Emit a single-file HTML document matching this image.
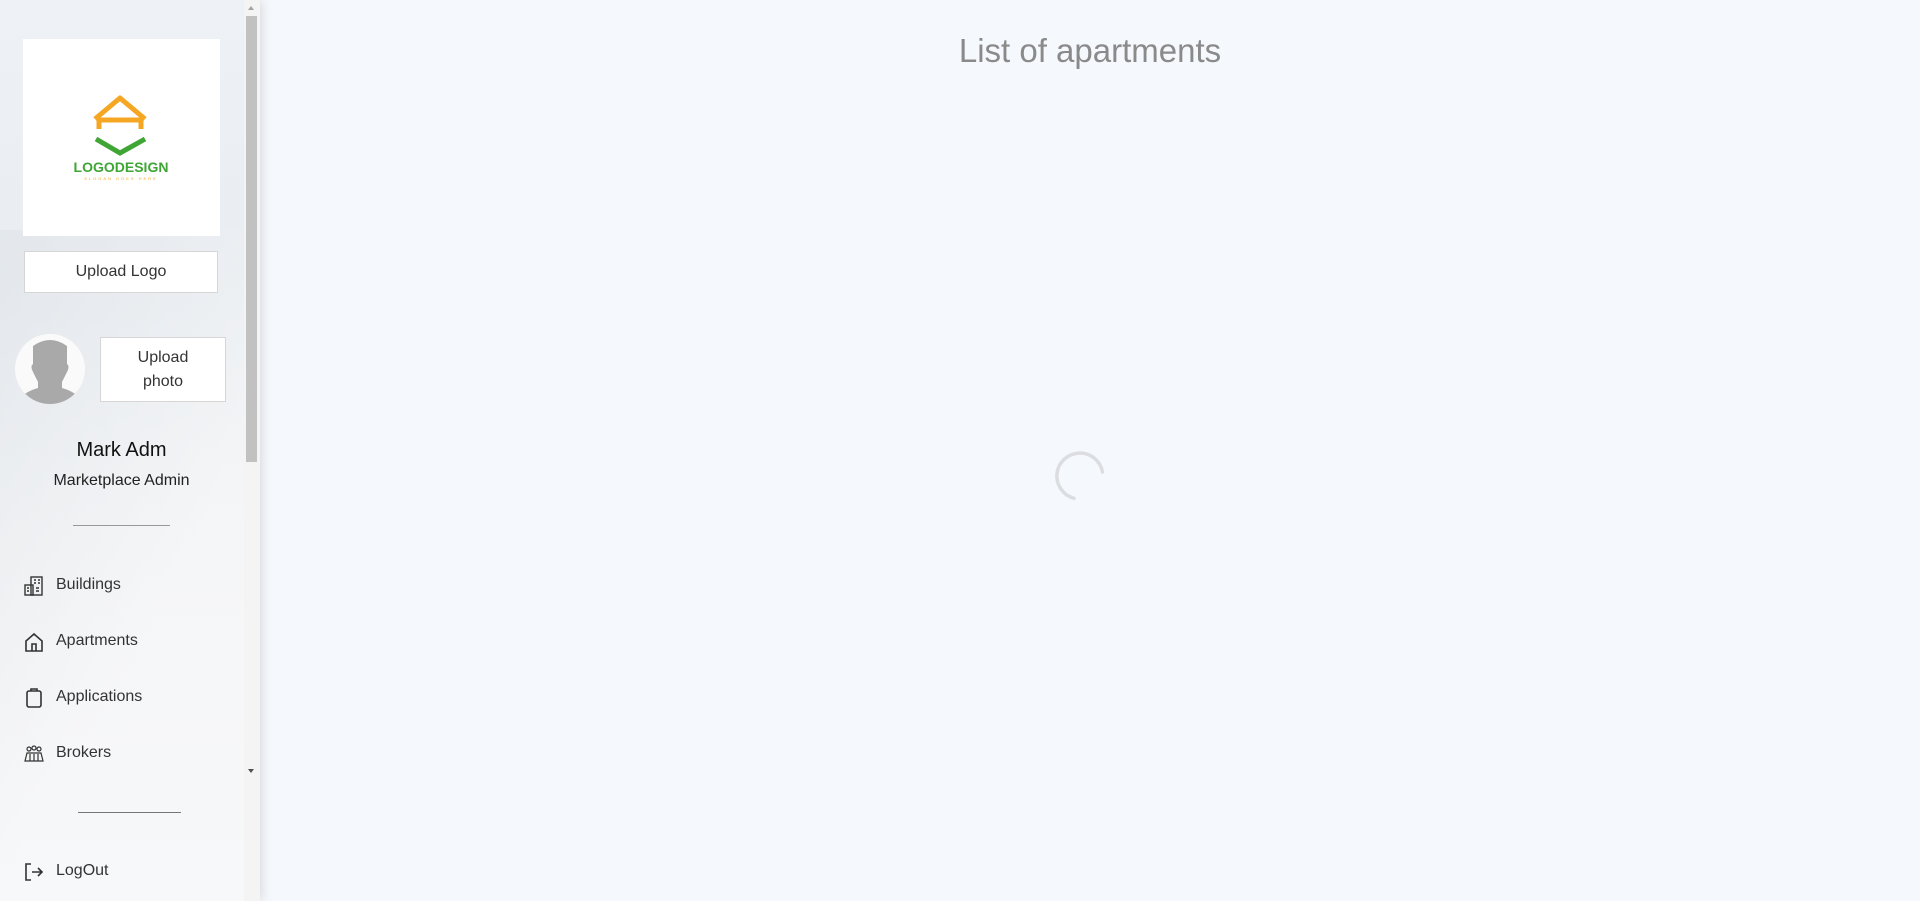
<!DOCTYPE html>
<html><head><meta charset="utf-8"><style>
*{margin:0;padding:0;box-sizing:border-box}
body{width:1920px;height:901px;background:#f5f8fc;font-family:"Liberation Sans",sans-serif;position:relative;overflow:hidden}
.side{position:absolute;left:0;top:0;width:260px;height:901px;background:linear-gradient(180deg,#eef2f6 0%,#e9edf1 30%,#f1f2f4 60%,#f4f5f6 100%);box-shadow:2px 0 10px rgba(0,0,0,.12)}
.a{position:absolute}
.btn{position:absolute;background:#fff;border:1px solid #d6d6d6;color:#333;font-size:16px;text-align:center}
.menu{position:absolute;left:56px;font-size:16px;color:#333}
.ic{position:absolute;left:24px}
</style></head><body>
<div class="side">
  <div class="a" style="left:0;top:230px;width:244px;height:671px;background:linear-gradient(120deg,rgba(220,225,230,.5),rgba(255,255,255,.3) 60%)"></div>
  <div class="a" style="left:23px;top:39px;width:197px;height:197px;background:#fff"></div>
  <svg class="a" style="left:23px;top:39px" width="197" height="197">
    <path d="M72 80 L97 59 L122 80 M76 79 L76 90 M118 79 L118 90 M74 81 L120 81" stroke="#f5a623" stroke-width="5" fill="none" stroke-linejoin="round"/>
    <path d="M73 100 L97 114 L122 100" stroke="#3fa535" stroke-width="5" fill="none"/>
    <text x="98" y="133" font-size="14" font-weight="bold" fill="#3fa535" text-anchor="middle" font-family="Liberation Sans">LOGODESIGN</text>
    <text x="98" y="141" font-size="4" fill="#f5a623" text-anchor="middle" letter-spacing="2" font-family="Liberation Sans">SLOGAN GOES HERE</text>
  </svg>
  <div class="btn" style="left:24px;top:251px;width:194px;height:42px;line-height:40px">Upload Logo</div>
  <div class="a" style="left:15px;top:334px;width:70px;height:70px;border-radius:50%;background:#fafafa;overflow:hidden">
    <svg width="70" height="70"><path d="M18 12 Q35 0 52 12 L52 30 Q55 32 52 38 L47 48 L47 54 Q62 58 70 70 L0 70 Q8 58 23 54 L23 48 L18 38 Q15 32 18 30Z" fill="#a9a9a9"/></svg>
  </div>
  <div class="btn" style="left:100px;top:337px;width:126px;height:65px;line-height:24px;padding-top:8px">Upload<br>photo</div>
  <div class="a" style="left:0;width:243px;top:439px;text-align:center;font-size:20px;color:#111">Mark Adm</div>
  <div class="a" style="left:0;width:243px;top:472px;text-align:center;font-size:16px;color:#222">Marketplace Admin</div>
  <div class="a" style="left:73px;top:525px;width:97px;height:1px;background:#999"></div>
  <svg class="ic" style="top:576px" width="20" height="20" fill="none" stroke="#333" stroke-width="1.4"><rect x="7" y="1" width="11" height="18"/><rect x="1" y="9" width="8" height="10"/><path d="M10 4h2M14 4h2M10 7h2M14 7h2M3 12h2M3 15h2M12 12h3M12 15h3"/></svg>
  <div class="menu" style="top:576px">Buildings</div>
  <svg class="ic" style="top:632px" width="20" height="20" fill="none" stroke="#333" stroke-width="1.6"><path d="M2 9 L10 2 L18 9 L18 19 L2 19Z M8 19 V12 H12 V19"/></svg>
  <div class="menu" style="top:632px">Apartments</div>
  <svg class="ic" style="top:688px" width="20" height="20" fill="none" stroke="#333" stroke-width="1.6"><rect x="3" y="3" width="14" height="16" rx="2"/><path d="M7 3V1H13V3"/></svg>
  <div class="menu" style="top:688px">Applications</div>
  <svg class="ic" style="top:744px" width="20" height="20" fill="none" stroke="#333" stroke-width="1.2"><circle cx="5" cy="5" r="2"/><circle cx="10" cy="4" r="2"/><circle cx="15" cy="5" r="2"/><path d="M1 17 L3 9 H17 L19 17Z M6 10V17 M10 10V17 M14 10V17"/></svg>
  <div class="menu" style="top:744px">Brokers</div>
  <div class="a" style="left:78px;top:812px;width:103px;height:1px;background:#777"></div>
  <svg class="ic" style="top:862px" width="20" height="20" fill="none" stroke="#333" stroke-width="1.6"><path d="M7 2H2V18H7 M8 10H18 M14 6L18 10L14 14"/></svg>
  <div class="menu" style="top:862px">LogOut</div>
  <div class="a" style="left:244px;top:0;width:16px;height:901px;background:#f4f4f4"></div>
  <div class="a" style="left:246px;top:16px;width:11px;height:446px;background:#c1c1c1"></div>
  <div class="a" style="left:248px;top:6px;width:0;height:0;border-left:3px solid transparent;border-right:3px solid transparent;border-bottom:4px solid #a3a3a3"></div>
  <div class="a" style="left:248px;top:769px;width:0;height:0;border-left:3px solid transparent;border-right:3px solid transparent;border-top:4px solid #505050"></div>
</div>
<div class="a" style="left:260px;width:1660px;top:32px;text-align:center;font-size:33px;color:#8a8a8a">List of apartments</div>
<svg class="a" style="left:1054px;top:450px" width="52" height="52"><path d="M48.5 22 A23 23 0 1 0 20 48.3" stroke="#dcdde0" stroke-width="3.5" fill="none" stroke-linecap="round"/></svg>
</body></html>
